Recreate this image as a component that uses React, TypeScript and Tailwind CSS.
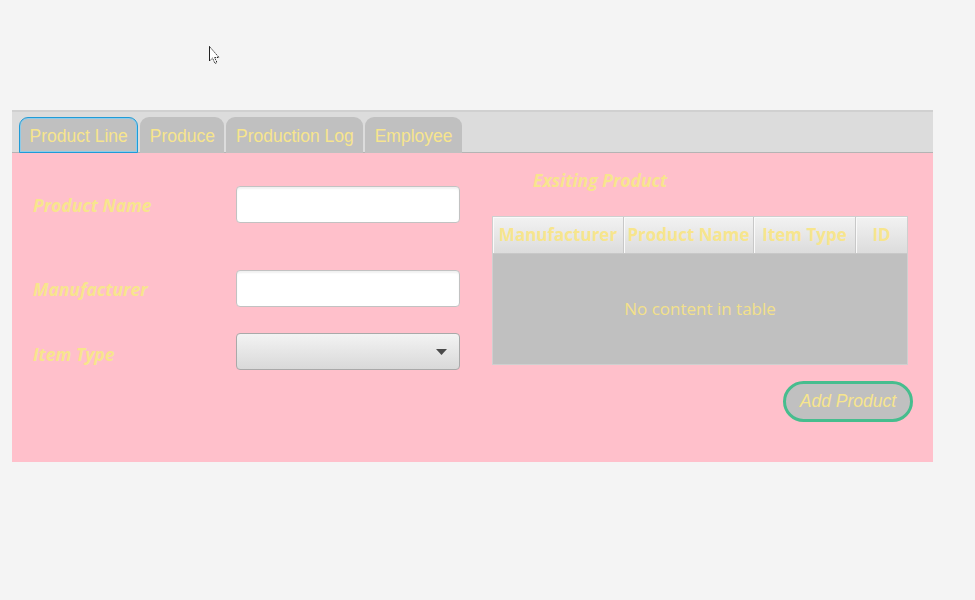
import React from 'react';

const label = "font-['Open_Sans',sans-serif] font-bold italic text-[17.5px] text-[#f7e58d]";

const tabs = ["Product Line", "Produce", "Production Log", "Employee"];

const columns = [
  { name: "Manufacturer", w: "w-[131px]" },
  { name: "Product Name", w: "w-[130px]" },
  { name: "Item Type", w: "w-[102px]" },
  { name: "ID", w: "flex-1" },
];

const App = () => {
  return (
    <div className="relative min-h-[600px] bg-[#f4f4f4]">
      {/* mouse pointer */}
      <svg className="absolute left-[209px] top-[46px]" width="13" height="19" viewBox="0 0 13 19">
        <path d="M0.5 0.5 L0.5 15 L3.5 12 L6 17.5 L8 16.5 L5.5 11.5 L10 11.5 Z" fill="#fff" stroke="#222" strokeWidth="1" strokeDasharray="1.5 1" />
        <path d="M0.5 0.5 L0.5 15" stroke="#222" strokeWidth="1" />
      </svg>

      <div className="pt-[110px] pl-[12px]">
        <div className="w-[921px]">
          {/* tab header */}
          <div className="h-[43px] bg-[#dcdcdc] border-t-2 border-[#d0d0d0] border-b border-b-[#b4b4b4] flex items-end gap-[2px] pl-[7px]">
            {tabs.map((t, i) => (
              <div
                key={t}
                className={`h-[36px] -mb-px flex items-center pt-[2px] px-[9.5px] rounded-t-[9px] bg-[#c0c0c0] font-['Liberation_Sans',Arial,sans-serif] text-[17.5px] text-[#f7e58d] ${
                  i === 0 ? 'border border-[#1f9bd7] rounded-t-[3px] shadow-[inset_0_0_0_1px_#8fcbe8]' : ''
                }`}
              >
                {t}
              </div>
            ))}
          </div>

          {/* body */}
          <div className="h-[309px] bg-[#ffc0cb] flex gap-[32px]">
            {/* form */}
            <div className="w-[448px] shrink-0 pl-[21px] pt-[33px] flex flex-col">
              <div className="flex items-center h-[37px]">
                <div className={`w-[203px] pt-[2px] ${label}`}>Product Name</div>
                <div className="w-[224px] h-[37px] bg-white border border-[#c2c2c2] rounded-[4px] shadow-[inset_0_2px_2px_rgba(0,0,0,0.06)]" />
              </div>
              <div className="flex items-center h-[37px] mt-[47px]">
                <div className={`w-[203px] pt-[2px] ${label}`}>Manufacturer</div>
                <div className="w-[224px] h-[37px] bg-white border border-[#c2c2c2] rounded-[4px] shadow-[inset_0_2px_2px_rgba(0,0,0,0.06)]" />
              </div>
              <div className="flex items-center h-[37px] mt-[26px]">
                <div className={`w-[203px] pt-[6px] ${label}`}>Item Type</div>
                <div className="w-[224px] h-[37px] border border-[#a9a9a9] rounded-[4px] bg-gradient-to-b from-[#f3f3f3] to-[#d9d9d9] flex items-center justify-end pr-[12px]">
                  <svg width="11" height="6" viewBox="0 0 11 6">
                    <path d="M0 0 L11 0 L5.5 6 Z" fill="#4a4a4a" />
                  </svg>
                </div>
              </div>
            </div>

            {/* existing products */}
            <div className="flex-1 flex flex-col pt-[16px]">
              <div className={`pl-[41px] leading-[22px] ${label}`}>Exsiting Product</div>
              <div className="mt-[25px] w-[416px] h-[149px] border border-[#cfcfcf] bg-[#c0c0c0] flex flex-col">
                <div className="h-[37px] flex border-b border-[#c8c8c8]">
                  {columns.map((c) => (
                    <div
                      key={c.name}
                      className={`${c.w} h-full overflow-hidden whitespace-nowrap flex items-center justify-center border-r border-[#c8c8c8] last:border-r-0 bg-gradient-to-b from-[#f2f2f2] to-[#dcdcdc] shadow-[inset_1px_1px_0_#fafafa] font-['Open_Sans',sans-serif] font-bold text-[17px] text-[#f7e58d]`}
                    >
                      {c.name}
                    </div>
                  ))}
                </div>
                <div className="flex-1 flex items-center justify-center font-['Open_Sans',sans-serif] text-[17px] text-[#f3e08a]">
                  No content in table
                </div>
              </div>
              <div className="flex justify-end pr-[20px] mt-[16px]">
                <button className="w-[130px] h-[41px] rounded-full border-[3px] border-[#47bd8e] bg-[#c0c0c0] font-['Liberation_Sans',Arial,sans-serif] italic text-[17.5px] text-[#f7e58d]">
                  Add Product
                </button>
              </div>
            </div>
          </div>
        </div>
      </div>
    </div>
  );
};

export default App;
